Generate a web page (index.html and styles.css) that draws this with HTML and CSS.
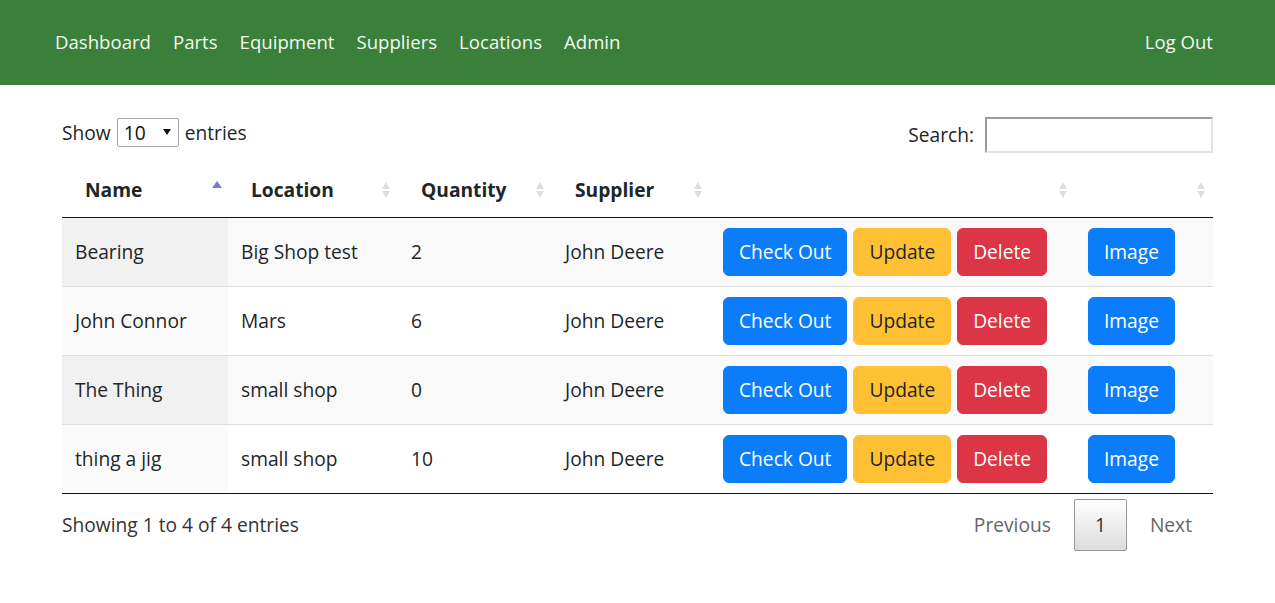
FILE: index.html
```html
<!DOCTYPE html>
<html lang="en">
<head>
<meta charset="utf-8">
<title>Parts</title>
<link rel="stylesheet" href="styles.css">
</head>
<body>
<header class="navbar">
  <nav class="nav-left">
    <a class="nav-link" href="#">Dashboard</a>
    <a class="nav-link" href="#">Parts</a>
    <a class="nav-link" href="#">Equipment</a>
    <a class="nav-link" href="#">Suppliers</a>
    <a class="nav-link" href="#">Locations</a>
    <a class="nav-link" href="#">Admin</a>
  </nav>
  <a class="nav-link" href="#">Log Out</a>
</header>

<main class="content">
  <div class="dt-top">
    <div class="dt-length">
      <span>Show</span>
      <span class="select"><span>10</span><svg class="caret" width="8" height="6" viewBox="0 0 8 6"><path d="M0 0H8L4 6Z" fill="#111"/></svg></span>
      <span>entries</span>
    </div>
    <div class="dt-filter">
      <span>Search:</span>
      <span class="search-input"></span>
    </div>
  </div>

  <table class="dt">
    <thead>
      <tr>
        <th class="c-name"><div class="th-in"><span>Name</span><svg class="sort sort-asc" width="10" height="18" viewBox="0 0 10 18"><path d="M0 9L5 2L10 9Z" fill="#7a7adc"/></svg></div></th>
        <th class="c-loc"><div class="th-in"><span>Location</span><svg class="sort" width="8" height="18" viewBox="0 0 8 18"><path d="M0 8L4 1L8 8Z M0 10L4 17L8 10Z" fill="#dedede"/></svg></div></th>
        <th class="c-qty"><div class="th-in"><span>Quantity</span><svg class="sort" width="8" height="18" viewBox="0 0 8 18"><path d="M0 8L4 1L8 8Z M0 10L4 17L8 10Z" fill="#dedede"/></svg></div></th>
        <th class="c-sup"><div class="th-in"><span>Supplier</span><svg class="sort" width="8" height="18" viewBox="0 0 8 18"><path d="M0 8L4 1L8 8Z M0 10L4 17L8 10Z" fill="#dedede"/></svg></div></th>
        <th class="c-act"><div class="th-in"><span></span><svg class="sort" width="8" height="18" viewBox="0 0 8 18"><path d="M0 8L4 1L8 8Z M0 10L4 17L8 10Z" fill="#dedede"/></svg></div></th>
        <th class="c-img"><div class="th-in"><span></span><svg class="sort" width="8" height="18" viewBox="0 0 8 18"><path d="M0 8L4 1L8 8Z M0 10L4 17L8 10Z" fill="#dedede"/></svg></div></th>
      </tr>
    </thead>
    <tbody>
      <tr class="odd">
        <td class="sorted">Bearing</td>
        <td>Big Shop test</td>
        <td>2</td>
        <td>John Deere</td>
        <td><div class="actions"><a class="btn btn-primary" href="#">Check Out</a><a class="btn btn-warning" href="#">Update</a><a class="btn btn-danger" href="#">Delete</a></div></td>
        <td><a class="btn btn-primary" href="#">Image</a></td>
      </tr>
      <tr class="even">
        <td class="sorted">John Connor</td>
        <td>Mars</td>
        <td>6</td>
        <td>John Deere</td>
        <td><div class="actions"><a class="btn btn-primary" href="#">Check Out</a><a class="btn btn-warning" href="#">Update</a><a class="btn btn-danger" href="#">Delete</a></div></td>
        <td><a class="btn btn-primary" href="#">Image</a></td>
      </tr>
      <tr class="odd">
        <td class="sorted">The Thing</td>
        <td>small shop</td>
        <td>0</td>
        <td>John Deere</td>
        <td><div class="actions"><a class="btn btn-primary" href="#">Check Out</a><a class="btn btn-warning" href="#">Update</a><a class="btn btn-danger" href="#">Delete</a></div></td>
        <td><a class="btn btn-primary" href="#">Image</a></td>
      </tr>
      <tr class="even">
        <td class="sorted">thing a jig</td>
        <td>small shop</td>
        <td>10</td>
        <td>John Deere</td>
        <td><div class="actions"><a class="btn btn-primary" href="#">Check Out</a><a class="btn btn-warning" href="#">Update</a><a class="btn btn-danger" href="#">Delete</a></div></td>
        <td><a class="btn btn-primary" href="#">Image</a></td>
      </tr>
    </tbody>
  </table>

  <div class="dt-bottom">
    <div class="dt-info">Showing 1 to 4 of 4 entries</div>
    <div class="dt-paginate">
      <a class="page-btn disabled" href="#">Previous</a>
      <a class="page-btn current" href="#">1</a>
      <a class="page-btn disabled" href="#">Next</a>
    </div>
  </div>
</main>
</body>
</html>
```

FILE: styles.css
```css
* { box-sizing: border-box; }

html, body {
  margin: 0;
  padding: 0;
  background: #fff;
}

body {
  font-family: "Open Sans", "Noto Sans", "DejaVu Sans", sans-serif;
  font-size: 19.2px;
  line-height: 30px;
  color: #212529;
}

a { text-decoration: none; }

/* Navbar */
.navbar {
  height: 85px;
  background: #3a7f3a;
  display: flex;
  align-items: center;
  justify-content: space-between;
  padding: 0 51px 0 44px;
}

.nav-left {
  display: flex;
  align-items: center;
}

.nav-link {
  color: #f3faf1;
  font-size: 18.6px;
  padding: 0 11px;
  line-height: 30px;
  margin-top: -1px;
}

/* Content */
.content {
  padding: 0 62px;
}

.dt-top {
  display: flex;
  justify-content: space-between;
  align-items: flex-start;
  padding-top: 32px;
}

.dt-length {
  display: flex;
  align-items: center;
  height: 29px;
  gap: 6px;
  padding-top: 2px;
}

.select {
  display: inline-flex;
  align-items: center;
  justify-content: space-between;
  width: 62px;
  height: 29px;
  border: 1px solid #a9a9a9;
  border-radius: 2px;
  padding: 0 7px 0 6px;
  color: #111;
  background: #fff;
}

.caret { margin-top: -2px; }

.dt-filter {
  display: flex;
  align-items: center;
  gap: 11px;
  height: 36px;
}

.search-input {
  display: block;
  width: 228px;
  height: 36px;
  border-style: solid;
  border-width: 2px;
  border-color: #9b9b9b #e3e3e3 #e3e3e3 #9b9b9b;
  background: #fff;
}

/* Table */
.dt {
  width: 100%;
  margin-top: 10px;
  border-collapse: collapse;
  border-spacing: 0;
  table-layout: fixed;
  border-bottom: 1px solid #111;
}

.c-name { width: 166px; }
.c-loc { width: 170px; }
.c-qty { width: 154px; }
.c-sup { width: 158px; }
.c-act { width: 365px; }
.c-img { width: 138px; }

.dt th {
  font-weight: 700;
  text-align: left;
  padding: 12px 8px 12px 23px;
  border-bottom: 1px solid #111;
  line-height: 30px;
}

.th-in {
  display: flex;
  align-items: center;
  justify-content: space-between;
}

.sort {
  display: block;
  flex: none;
  margin-top: 0;
}

.sort-asc {
  margin-right: -2px;
  margin-top: -5px;
}

.dt td {
  padding: 10px 13px;
  vertical-align: middle;
  border-top: 1px solid #ddd;
  white-space: nowrap;
  line-height: 30px;
}

.dt tbody tr:first-child td { border-top: none; }

.dt tr.odd td { background: #f9f9f9; }
.dt tr.odd td.sorted { background: #f1f1f1; }
.dt tr.even td { background: #fff; }
.dt tr.even td.sorted { background: #fafafa; }

.actions {
  display: flex;
  gap: 6px;
}

.btn {
  display: inline-block;
  padding: 8px 15px;
  line-height: 30px;
  border: 1px solid transparent;
  border-radius: 6px;
  font-size: 19.2px;
}

.btn-primary { background: #0b7dfb; border-color: #0b7dfb; color: #fff; }
.btn-warning { background: #ffc133; border-color: #ffc133; color: #212529; }
.btn-danger { background: #dc3545; border-color: #dc3545; color: #fff; }

/* Bottom */
.dt-bottom {
  display: flex;
  justify-content: space-between;
  align-items: flex-start;
}

.dt-info {
  padding-top: 16px;
  color: #333;
}

.dt-paginate {
  display: flex;
  padding-top: 5px;
}

.page-btn {
  display: block;
  padding: 10px 20px;
  line-height: 30px;
  margin-left: 2px;
  border: 1px solid transparent;
  border-radius: 2px;
  color: #666;
}

.page-btn.current {
  color: #333;
  border-color: #979797;
  background: linear-gradient(to bottom, #ffffff 0%, #dcdcdc 100%);
}
```
